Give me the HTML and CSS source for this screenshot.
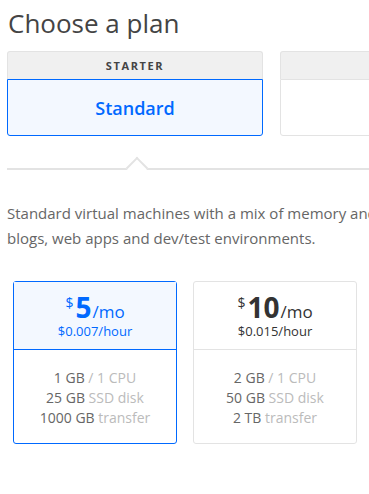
FILE: index.html
```html
<!DOCTYPE html>
<html>
<head>
<meta charset="utf-8">
<link rel="stylesheet" href="styles.css">
</head>
<body>
<div class="page">
  <h1 class="title">Choose a plan</h1>
  <div class="tabs">
    <div class="tab selected">
      <div class="tab-head">STARTER</div>
      <div class="tab-body">Standard</div>
    </div>
    <div class="tab">
      <div class="tab-head"></div>
      <div class="tab-body"></div>
    </div>
  </div>
  <div class="divider"><span class="notch"></span></div>
  <p class="desc">Standard virtual machines with a mix of memory and compute resources. Best for small projects like<br>blogs, web apps and dev/test environments.</p>
  <div class="cards">
    <div class="card selected">
      <div class="card-top">
        <div class="price"><span class="cur">$</span><span class="amt">5</span><span class="per">/mo</span></div>
        <div class="hour">$0.007<span class="hr">/hour</span></div>
      </div>
      <div class="card-specs">
        <div>1 GB <span class="lt">/ 1 CPU</span></div>
        <div>25 GB <span class="lt">SSD disk</span></div>
        <div>1000 GB <span class="lt">transfer</span></div>
      </div>
    </div>
    <div class="card">
      <div class="card-top">
        <div class="price"><span class="cur">$</span><span class="amt">10</span><span class="per">/mo</span></div>
        <div class="hour">$0.015<span class="hr">/hour</span></div>
      </div>
      <div class="card-specs">
        <div>2 GB <span class="lt">/ 1 CPU</span></div>
        <div>50 GB <span class="lt">SSD disk</span></div>
        <div>2 TB <span class="lt">transfer</span></div>
      </div>
    </div>
  </div>
</div>
</body>
</html>
```
FILE: styles.css
```css
html, body {
  margin: 0;
  padding: 0;
  background: #fff;
  overflow: hidden;
}
body {
  font-family: "Open Sans", "Liberation Sans", sans-serif;
  color: #444;
}
.page {
  width: 760px;
  padding-left: 7px;
}
.title {
  margin: 0;
  padding: 6px 0 0 1px;
  font-size: 26px;
  font-weight: 400;
  line-height: 34px;
  color: #444;
}
.tabs {
  display: flex;
  gap: 17px;
  margin-top: 11px;
}
.tab {
  width: 256px;
  display: flex;
  flex-direction: column;
}
.tab-head {
  height: 27px;
  background: #f0f0f0;
  border: 1px solid #e3e3e3;
  border-bottom: none;
  border-radius: 3px 3px 0 0;
  font-size: 11px;
  font-weight: 700;
  letter-spacing: 1.6px;
  color: #444;
  display: flex;
  align-items: center;
  justify-content: center;
}
.tab-body {
  height: 55px;
  border: 1px solid #e3e3e3;
  border-radius: 0 0 3px 3px;
  background: #fff;
  display: flex;
  align-items: center;
  justify-content: center;
  font-size: 18px;
  font-weight: 600;
  color: #0069ff;
}
.tab.selected .tab-body {
  border-color: #0069ff;
  background: #f3f8ff;
}
.divider {
  position: relative;
  height: 2px;
  background: #e3e3e3;
  margin-top: 32px;
}
.notch {
  position: absolute;
  left: 122px;
  top: -8px;
  width: 14px;
  height: 14px;
  background: #fff;
  border-top: 2px solid #e3e3e3;
  border-left: 2px solid #e3e3e3;
  transform: rotate(45deg);
}
.desc {
  margin: 31px 0 0 0;
  font-size: 15px;
  line-height: 25px;
  color: #666;
  white-space: nowrap;
}
.cards {
  display: flex;
  gap: 16px;
  margin: 30px 0 0 6px;
}
.card {
  width: 162px;
  height: 161px;
  border: 1px solid #e3e3e3;
  border-radius: 3px;
  display: flex;
  flex-direction: column;
}
.card.selected {
  border-color: #0069ff;
}
.card-top {
  height: 68px;
  border-bottom: 1px solid #e3e3e3;
  display: flex;
  flex-direction: column;
  align-items: center;
  box-sizing: border-box;
  color: #333;
}
.card.selected .card-top {
  background: #f3f8ff;
  border-bottom-color: #0069ff;
  color: #0069ff;
}
.price {
  display: flex;
  align-items: baseline;
  margin-top: 11px;
  line-height: 28px;
  height: 28px;
}
.cur {
  font-size: 14px;
  line-height: 14px;
  align-self: flex-start;
  margin-top: 3px;
  margin-right: 2px;
}
.amt {
  font-size: 28px;
  font-weight: 700;
}
.per {
  font-size: 17px;
  margin-left: 1px;
}
.hour {
  font-size: 13px;
  line-height: 16px;
  margin-top: 2px;
}
.card-specs {
  padding-top: 18px;
  display: flex;
  flex-direction: column;
  align-items: center;
  font-size: 14px;
  line-height: 20px;
  color: #666;
}
.lt {
  color: #bbb;
}
```
